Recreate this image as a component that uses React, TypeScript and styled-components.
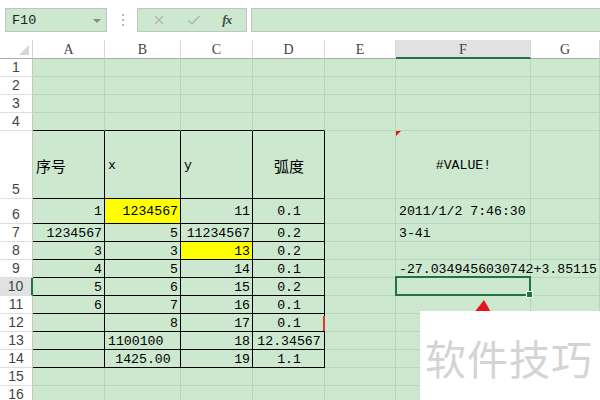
import React from 'react';
import styled, { createGlobalStyle } from 'styled-components';

type Align = 'left' | 'right' | 'center';

type CellData = {
  text: string;
  align?: Align;
  yellow?: boolean;
  spill?: boolean;
};

const COLS = ['A', 'B', 'C', 'D', 'E', 'F', 'G'];
const COL_WIDTHS = [33, 72, 76, 72, 72, 71, 135, 69];
const ROW_COUNT = 16;
const rowHeight = (r: number) => (r === 5 ? 68 : r === 6 ? 25 : 18);

const GREEN = '#cce8cf';
const GRID = '#b9d6bc';
const EXCEL = '#217346';

// sheet contents, keyed by row then column letter
const CELLS: Record<number, Record<string, CellData>> = {
  5: {
    A: { text: '序号', align: 'left' },
    B: { text: 'x', align: 'left' },
    C: { text: 'y', align: 'left' },
    D: { text: '弧度', align: 'center' },
    F: { text: '#VALUE!', align: 'center' }
  },
  6: {
    A: { text: '1' },
    B: { text: '1234567', yellow: true },
    C: { text: '11' },
    D: { text: '0.1', align: 'center' },
    F: { text: '2011/1/2 7:46:30', align: 'left' }
  },
  7: {
    A: { text: '1234567' },
    B: { text: '5' },
    C: { text: '11234567' },
    D: { text: '0.2', align: 'center' },
    F: { text: '3-4i', align: 'left' }
  },
  8: {
    A: { text: '3' },
    B: { text: '3' },
    C: { text: '13', yellow: true },
    D: { text: '0.2', align: 'center' }
  },
  9: {
    A: { text: '4' },
    B: { text: '5' },
    C: { text: '14' },
    D: { text: '0.1', align: 'center' },
    F: { text: '-27.0349456030742+3.85115', align: 'left', spill: true }
  },
  10: {
    A: { text: '5' },
    B: { text: '6' },
    C: { text: '15' },
    D: { text: '0.2', align: 'center' }
  },
  11: {
    A: { text: '6' },
    B: { text: '7' },
    C: { text: '16' },
    D: { text: '0.1', align: 'center' }
  },
  12: {
    B: { text: '8' },
    C: { text: '17' },
    D: { text: '0.1', align: 'center' }
  },
  13: {
    B: { text: '1100100', align: 'left' },
    C: { text: '18' },
    D: { text: '12.34567', align: 'center' }
  },
  14: {
    B: { text: '1425.00', align: 'center' },
    C: { text: '19' },
    D: { text: '1.1', align: 'center' }
  }
};

const GlobalStyle = createGlobalStyle`
  html, body {
    margin: 0;
    padding: 0;
    background: #ffffff;
    overflow: hidden;
  }
  body {
    width: 600px;
    height: 400px;
  }
`;

const Page = styled.div`
  position: relative;
  width: 600px;
  height: 400px;
  overflow: hidden;
  background: #ffffff;
`;

const FormulaBar = styled.div`
  display: flex;
  align-items: center;
  height: 40px;
  padding: 0 0 0 5px;
  box-sizing: border-box;
`;

const NameBox = styled.div`
  display: flex;
  align-items: center;
  justify-content: space-between;
  width: 102px;
  height: 24px;
  box-sizing: border-box;
  padding: 1px 5px 0 6px;
  background: ${GREEN};
  border: 1px solid #c3c3c3;
  font-family: 'Liberation Mono', monospace;
  font-size: 13.5px;
  color: #222;
`;

const DropArrow = styled.span`
  width: 0;
  height: 0;
  border-left: 4px solid transparent;
  border-right: 4px solid transparent;
  border-top: 4px solid #8a8a8a;
`;

const Grip = styled.div`
  display: flex;
  flex-direction: column;
  gap: 3px;
  margin: 0 13px 0 15px;

  span {
    width: 2px;
    height: 2px;
    background: #b8b8b8;
  }
`;

const FxButtons = styled.div`
  display: flex;
  align-items: center;
  justify-content: space-around;
  width: 110px;
  height: 24px;
  box-sizing: border-box;
  padding: 0 4px;
  background: ${GREEN};
  border: 1px solid #c3c3c3;
`;

const FxLabel = styled.span`
  font-family: 'Liberation Serif', serif;
  font-style: italic;
  font-weight: bold;
  font-size: 13px;
  color: #4a4a4a;
  letter-spacing: -1px;
`;

const FormulaInput = styled.div`
  flex: 1;
  height: 24px;
  margin-left: 4px;
  box-sizing: border-box;
  background: ${GREEN};
  border: 1px solid #c3c3c3;
  border-right: none;
`;

const Sheet = styled.div<{ $rows: string }>`
  display: grid;
  grid-template-columns: ${COL_WIDTHS.map((w) => `${w}px`).join(' ')};
  grid-template-rows: ${(p) => p.$rows};
`;

const Corner = styled.div`
  display: flex;
  align-items: flex-end;
  justify-content: flex-end;
  padding: 0 3px 3px 0;
  border-bottom: 1px solid #ababab;
  border-right: 1px solid #d4d4d4;
  box-sizing: border-box;
`;

const ColHeader = styled.div<{ $selected?: boolean }>`
  display: flex;
  align-items: center;
  justify-content: center;
  box-sizing: border-box;
  padding-top: 2px;
  background: ${(p) => (p.$selected ? '#e1e1e1' : '#ffffff')};
  border-right: 1px solid #d9d9d9;
  border-bottom: ${(p) => (p.$selected ? `2px solid ${EXCEL}` : '1px solid #ababab')};
  font-family: 'Liberation Serif', serif;
  font-size: 14px;
  color: ${(p) => (p.$selected ? '#2a4a36' : '#444')};
`;

const RowHeader = styled.div<{ $selected?: boolean }>`
  display: flex;
  align-items: flex-end;
  justify-content: center;
  box-sizing: border-box;
  padding-bottom: 1px;
  background: ${(p) => (p.$selected ? '#e1e1e1' : '#ffffff')};
  border-bottom: 1px solid #dedede;
  border-right: ${(p) => (p.$selected ? `2px solid ${EXCEL}` : '1px solid #c6c6c6')};
  font-family: 'Liberation Sans', sans-serif;
  font-size: 14px;
  color: ${(p) => (p.$selected ? '#2f4f3c' : '#444')};
`;

const Cell = styled.div<{ $align: Align; $yellow?: boolean; $boxR?: boolean; $boxB?: boolean; $pin?: boolean; $top?: boolean }>`
  display: flex;
  align-items: center;
  justify-content: ${(p) => (p.$align === 'left' ? 'flex-start' : p.$align === 'center' ? 'center' : 'flex-end')};
  position: ${(p) => (p.$pin || p.$top ? 'relative' : 'static')};
  z-index: ${(p) => (p.$pin ? 2 : p.$top ? 1 : 'auto')};
  box-sizing: border-box;
  min-width: 0;
  padding: 1px 2px 0 3px;
  background: ${(p) => (p.$yellow ? '#ffff00' : GREEN)};
  border-right: 1px solid ${(p) => (p.$boxR ? '#000' : GRID)};
  border-bottom: 1px solid ${(p) => (p.$boxB ? '#000' : GRID)};
  font-family: 'Liberation Mono', 'Noto Sans CJK SC', monospace;
  font-size: 13.2px;
  color: #000;
  white-space: pre;
`;

const CjkText = styled.span`
  font-family: 'Noto Sans CJK SC', sans-serif;
  font-size: 15px;
`;

const CommentMark = styled.span`
  position: absolute;
  top: 0;
  left: 0;
  width: 0;
  height: 0;
  border-top: 5px solid #e3141b;
  border-right: 5px solid transparent;
`;

const RedEdge = styled.span`
  position: absolute;
  right: -1px;
  top: 2px;
  width: 2px;
  height: 15px;
  background: #e0362c;
`;

const Selection = styled.span`
  position: absolute;
  top: -2px;
  left: -1px;
  right: -1px;
  bottom: -1px;
  border: 2px solid ${EXCEL};
  box-sizing: border-box;

  &::after {
    content: '';
    position: absolute;
    right: -4px;
    bottom: -4px;
    width: 5px;
    height: 5px;
    background: ${EXCEL};
    border: 1px solid #fff;
  }
`;

const Arrow = styled.svg`
  position: absolute;
  left: 470px;
  top: 298px;
`;

const Watermark = styled.div`
  position: absolute;
  left: 420px;
  top: 311px;
  right: 0;
  bottom: 0;
  display: flex;
  align-items: center;
  padding-left: 5px;
  padding-top: 2px;
  box-sizing: border-box;
  background: #ffffff;
  font-family: 'Noto Sans CJK SC', sans-serif;
  font-size: 41px;
  color: #d4d4d4;
  letter-spacing: 1px;
  white-space: nowrap;
`;

const hasCjk = (s: string) => /[\u4e00-\u9fff]/.test(s);

const App: React.FC = () => {
  const rows = Array.from({ length: ROW_COUNT }, (_, i) => i + 1);
  const rowTemplate = ['19px', ...rows.map((r) => `${rowHeight(r)}px`)].join(' ');

  return (
    <Page>
      <GlobalStyle />
      <FormulaBar>
        <NameBox>
          F10
          <DropArrow />
        </NameBox>
        <Grip>
          <span />
          <span />
          <span />
        </Grip>
        <FxButtons>
          <svg width='12' height='12' viewBox='0 0 12 12'>
            <path d='M2 2 L10 10 M10 2 L2 10' stroke='#b3b3b3' strokeWidth='1.3' fill='none' />
          </svg>
          <svg width='14' height='12' viewBox='0 0 14 12'>
            <path d='M1.5 6.5 L5 10 L12.5 2' stroke='#b3b3b3' strokeWidth='1.4' fill='none' />
          </svg>
          <FxLabel>fx</FxLabel>
        </FxButtons>
        <FormulaInput />
      </FormulaBar>

      <Sheet $rows={rowTemplate}>
        <Corner>
          <svg width='10' height='10' viewBox='0 0 10 10'>
            <polygon points='10,0 10,10 0,10' fill='#d6d6d6' />
          </svg>
        </Corner>
        {COLS.map((c) => (
          <ColHeader key={c} $selected={c === 'F'}>{c}</ColHeader>
        ))}
        {rows.map((r) => (
          <React.Fragment key={r}>
            <RowHeader $selected={r === 10}>{r}</RowHeader>
            {COLS.map((c, ci) => {
              const cell = CELLS[r]?.[c];
              const inTable = ci <= 3;
              const boxB = inTable && r >= 4 && r <= 14;
              const boxR = inTable && r >= 5 && r <= 14;
              const isComment = r === 5 && c === 'F';
              const isSel = r === 10 && c === 'F';
              const isEdge = r === 12 && c === 'D';
              const text = cell?.text ?? '';
              return (
                <Cell
                  key={c}
                  $align={cell?.align ?? 'right'}
                  $yellow={cell?.yellow}
                  $boxB={boxB}
                  $boxR={boxR}
                  $pin={isComment || isSel || isEdge}
                  $top={cell?.spill}
                >
                  {hasCjk(text) ? <CjkText>{text}</CjkText> : text}
                  {isComment && <CommentMark />}
                  {isSel && <Selection />}
                  {isEdge && <RedEdge />}
                </Cell>
              );
            })}
          </React.Fragment>
        ))}
      </Sheet>

      <Arrow width='24' height='16' viewBox='0 0 24 16'>
        <polygon points='14,2 3,16 22,16' fill='#e3141b' />
      </Arrow>
      <Watermark>软件技巧</Watermark>
    </Page>
  );
};

export default App;
